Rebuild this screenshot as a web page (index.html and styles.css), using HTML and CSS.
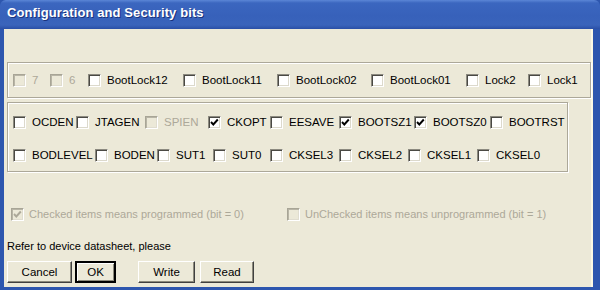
FILE: index.html
```html
<!DOCTYPE html>
<html lang="en">
	<head>
		<title>Configuration and Security bits</title>
		<meta http-equiv="Content-Type" content="text/html; charset=utf-8">
		<link rel="stylesheet" href="styles.css">
	</head>
	<body>
		<div class="window">
			<div class="titlebar">Configuration and Security bits</div>
			<div class="client">
				<div class="group group-lock">
					<div class="row row-lock">
						<label class="item disabled"><span class="box"></span>7</label>
						<label class="item disabled"><span class="box"></span>6</label>
						<label class="item"><span class="box"></span>BootLock12</label>
						<label class="item"><span class="box"></span>BootLock11</label>
						<label class="item"><span class="box"></span>BootLock02</label>
						<label class="item"><span class="box"></span>BootLock01</label>
						<label class="item"><span class="box"></span>Lock2</label>
						<label class="item"><span class="box"></span>Lock1</label>
					</div>
				</div>
				<div class="group group-fuse">
					<div class="row row-high">
						<label class="item"><span class="box"></span>OCDEN</label>
						<label class="item"><span class="box"></span>JTAGEN</label>
						<label class="item disabled"><span class="box"></span>SPIEN</label>
						<label class="item"><span class="box checked"><svg viewBox="0 0 11 11"><polyline points="2,5 4.3,7.5 8.8,2.5"/></svg></span>CKOPT</label>
						<label class="item"><span class="box"></span>EESAVE</label>
						<label class="item"><span class="box checked"><svg viewBox="0 0 11 11"><polyline points="2,5 4.3,7.5 8.8,2.5"/></svg></span>BOOTSZ1</label>
						<label class="item"><span class="box checked"><svg viewBox="0 0 11 11"><polyline points="2,5 4.3,7.5 8.8,2.5"/></svg></span>BOOTSZ0</label>
						<label class="item"><span class="box"></span>BOOTRST</label>
					</div>
					<div class="row row-low">
						<label class="item"><span class="box"></span>BODLEVEL</label>
						<label class="item"><span class="box"></span>BODEN</label>
						<label class="item"><span class="box"></span>SUT1</label>
						<label class="item"><span class="box"></span>SUT0</label>
						<label class="item"><span class="box"></span>CKSEL3</label>
						<label class="item"><span class="box"></span>CKSEL2</label>
						<label class="item"><span class="box"></span>CKSEL1</label>
						<label class="item"><span class="box"></span>CKSEL0</label>
					</div>
				</div>
				<div class="row row-note">
					<label class="item disabled"><span class="box checked"><svg viewBox="0 0 11 11"><polyline points="2,5 4.3,7.5 8.8,2.5"/></svg></span>Checked items means programmed (bit = 0)</label>
					<label class="item disabled"><span class="box"></span>UnChecked items means unprogrammed (bit = 1)</label>
				</div>
				<p class="hint">Refer to device datasheet, please</p>
				<div class="buttons">
					<button class="btn btn-cancel">Cancel</button>
					<button class="btn btn-ok">OK</button>
					<button class="btn btn-write">Write</button>
					<button class="btn btn-read">Read</button>
				</div>
			</div>
		</div>
	</body>
</html>
```
FILE: styles.css
```css
body {
	margin: 0;
	font-family: 'Liberation Sans', Arial, sans-serif;
	font-size: 11.5px;
	color: #000;
}
.window {
	width: 600px;
	height: 290px;
	display: flex;
	flex-direction: column;
	background: #2d56ae;
}
.titlebar {
	height: 29px;
	box-sizing: border-box;
	padding: 5px 0 0 7px;
	background: linear-gradient(#5b86d6 0, #3b66bf 3px, #3761ba 16px, #3a64bb 25px, #2a4fa6 29px);
	color: #fff;
	font-weight: bold;
	font-size: 13px;
	letter-spacing: 0.1px;
	text-shadow: 1px 1px 0 #1a327c;
	border-radius: 6px 6px 0 0;
}
.client {
	flex: 1;
	margin: 0 7px 3px 4px;
	padding: 0 0 0 3px;
	background: #ece9d8;
	border-right: 2px solid #fbf8e4;
	display: flex;
	flex-direction: column;
}
.group {
	box-sizing: border-box;
	border: 1px solid #aca899;
	box-shadow: inset 1px 1px 0 #fff, 1px 1px 0 #fff;
}
.group-lock {
	margin-top: 33px;
	height: 36px;
	padding: 11px 0 0 5px;
}
.group-fuse {
	margin-top: 4px;
	width: 561px;
	height: 70px;
	padding: 13px 0 0 5px;
}
.row {
	display: grid;
	height: 13px;
	align-items: center;
}
.row-lock {
	grid-template-columns: 37px 38px 95px 94px 94px 95px 62px auto;
}
.row-high {
	grid-template-columns: 63px 69px 63px 62px 69px 75px 76px auto;
}
.row-low {
	margin-top: 20px;
	grid-template-columns: 82px 62px 56px 57px 69px 69px 69px auto;
}
.row-note {
	margin-top: 36px;
	padding-left: 4px;
	font-size: 11px;
	grid-template-columns: 276px auto;
}
.item {
	display: flex;
	align-items: center;
	white-space: nowrap;
	line-height: 13px;
}
.item.disabled {
	color: #aca899;
}
.box {
	width: 13px;
	height: 13px;
	box-sizing: border-box;
	margin-right: 6px;
	flex: none;
	background: #fff;
	border: 1px solid;
	border-color: #8c8a80 #fff #fff #8c8a80;
	box-shadow: inset 1px 1px 0 #4a4944, inset -1px -1px 0 #dcd9cc;
}
.row-note .box {
	margin-right: 5px;
}
.disabled .box {
	background: #ece9d8;
	border-color: #a8a596 #fff #fff #a8a596;
	box-shadow: inset 1px 1px 0 #b8b5a6, inset -1px -1px 0 #e0ddd0;
}
.box svg {
	display: block;
	width: 11px;
	height: 11px;
}
.box polyline {
	fill: none;
	stroke: #000;
	stroke-width: 1.9;
}
.disabled .box polyline {
	stroke: #aca899;
}
.hint {
	margin: 19px 0 0 0;
	font-size: 11px;
	line-height: 13px;
}
.buttons {
	display: flex;
	margin-top: 8px;
}
.btn {
	height: 22px;
	box-sizing: border-box;
	padding: 0;
	font-family: 'Liberation Sans', Arial, sans-serif;
	font-size: 11.5px;
	color: #000;
	background: #ece9d8;
	border: 1px solid;
	border-color: #fff #404040 #404040 #fff;
	box-shadow: inset -1px -1px 0 #8c8a7c;
}
.btn-cancel {
	width: 65px;
}
.btn-ok {
	width: 41px;
	margin-left: 3px;
	border: 2px solid #000;
	box-shadow: inset 1px 1px 0 #fff, inset -1px -1px 0 #8c8a7c;
}
.btn-write {
	width: 57px;
	margin-left: 22px;
}
.btn-read {
	width: 54px;
	margin-left: 5px;
}
```
